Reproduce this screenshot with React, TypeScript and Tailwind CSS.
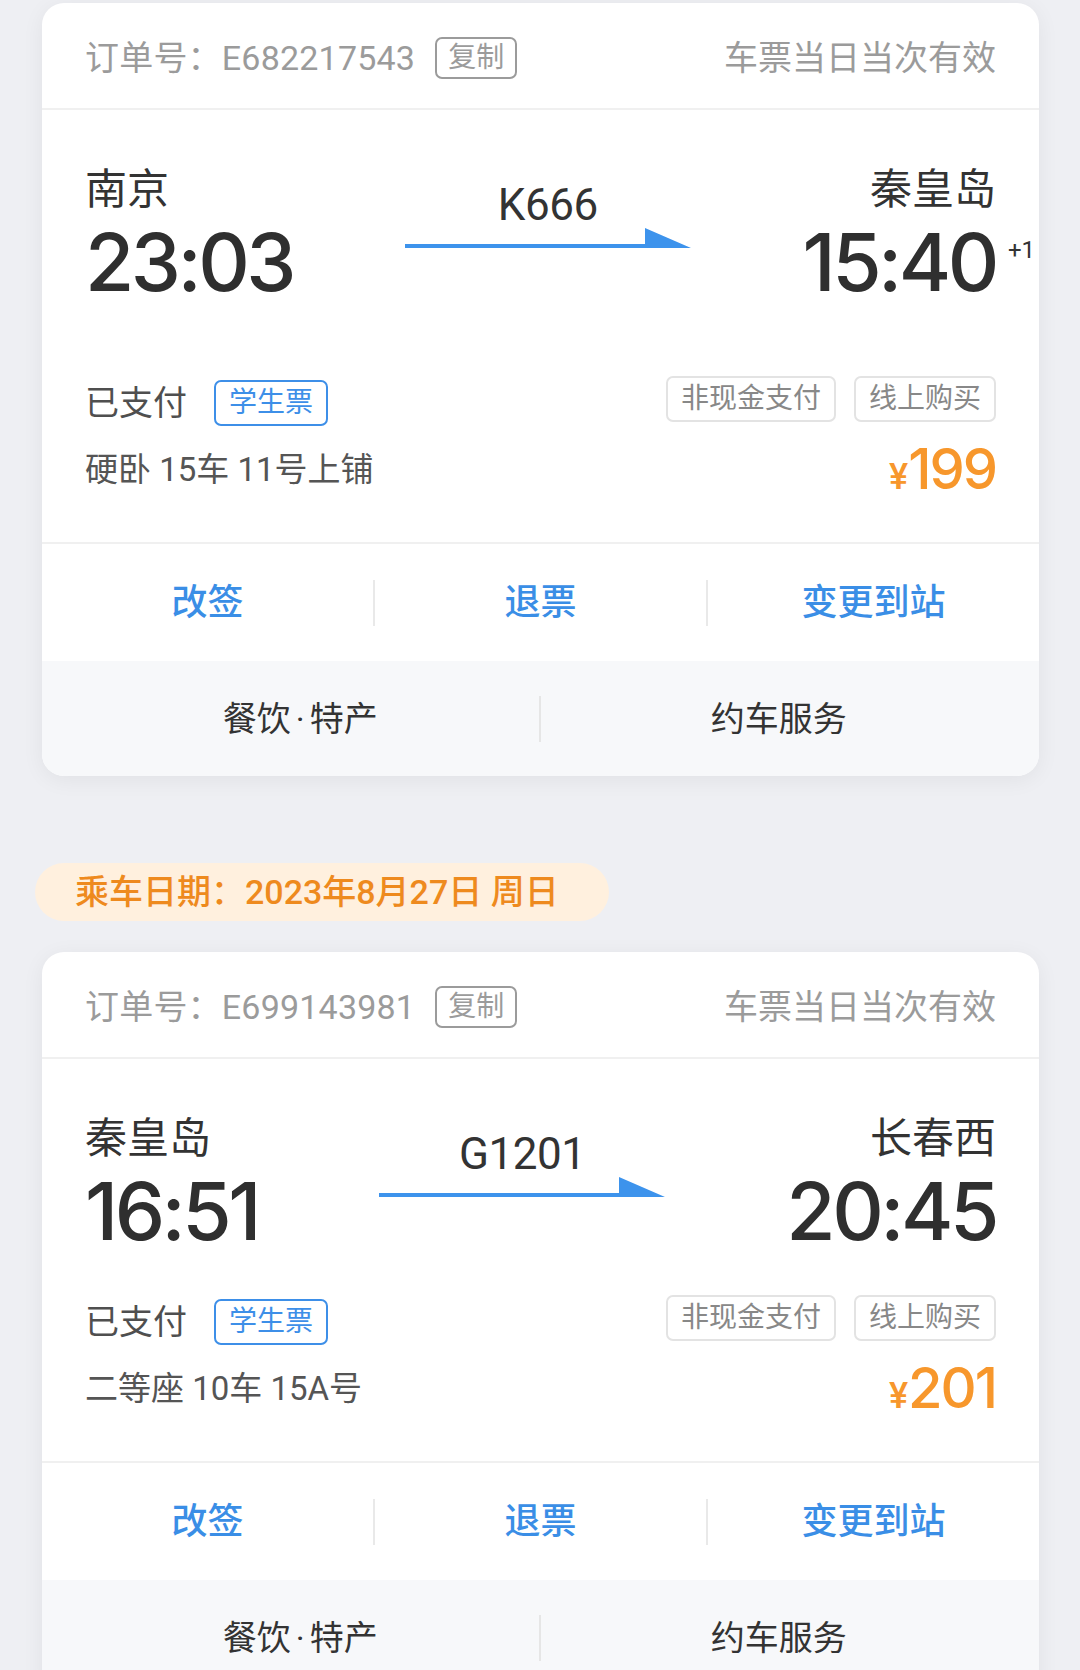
import React from "react";

type Ticket = {
  order: string;
  from: string;
  to: string;
  dep: string;
  arr: string;
  train: string;
  plusOne?: boolean;
  seat: string;
  price: string;
  gap: "wide" | "narrow";
};

const tickets: Ticket[] = [
  { order: "E682217543", from: "南京", to: "秦皇岛", dep: "23:03", arr: "15:40", train: "K666", plusOne: true, seat: "硬卧 15车 11号上铺", price: "199", gap: "wide" },
  { order: "E699143981", from: "秦皇岛", to: "长春西", dep: "16:51", arr: "20:45", train: "G1201", seat: "二等座 10车 15A号", price: "201", gap: "narrow" },
];

function Arrow() {
  return (
    <svg width="286" height="21" viewBox="0 0 286 21" className="-mt-px block">
      <polygon points="0,16 240,16 240,0 286,20 0,20" fill="#3d93ec" />
    </svg>
  );
}

function GrayTag({ children }: { children: React.ReactNode }) {
  return (
    <span className="flex h-[46px] items-center rounded-[7px] border-2 border-[#e3e3e3] px-[13px] text-[28px] leading-none text-[#888]">
      {children}
    </span>
  );
}

function TicketCard({ t }: { t: Ticket }) {
  return (
    <div className="ml-[42px] w-[997px] overflow-hidden rounded-[22px] bg-white shadow-[0_4px_22px_rgba(0,0,0,0.06)]">
      {/* order no. */}
      <div className="flex h-[107px] items-center justify-between border-b-2 border-[#f0f0f0] px-[43px] pt-[4px]">
        <div className="flex items-center text-[34px] leading-none text-[#9b9b9b]">
          <span className="tracking-[0.2px]">订单号：{t.order}</span>
          <span className="ml-[20px] flex h-[42px] items-center rounded-[7px] border-2 border-[#9b9b9b] px-[11px] text-[28px] leading-none">
            复制
          </span>
        </div>
        <span className="text-[34px] leading-none text-[#9b9b9b]">车票当日当次有效</span>
      </div>

      {/* route */}
      <div className="border-b-2 border-[#f0f0f0] px-[43px] pb-[45px] pt-[56px]">
        <div className="flex items-start">
          <div className="flex flex-col items-start">
            <span className="text-[42px] leading-[48px] text-[#333]">{t.from}</span>
            <span className="mt-[8px] font-['Inter',sans-serif] text-[80px] font-medium leading-none tracking-[-3.5px] text-[#2f2f2f]">
              {t.dep}
            </span>
          </div>
          <div className="flex flex-1 flex-col items-center pt-[15px]">
            <span className="text-[44px] leading-[48px] tracking-[-0.5px] text-[#333]">{t.train}</span>
            <Arrow />
          </div>
          <div className="flex flex-col items-end">
            <span className="text-[42px] leading-[48px] text-[#333]">{t.to}</span>
            <span className="relative mt-[8px] font-['Inter',sans-serif] text-[80px] font-medium leading-none tracking-[-3.5px] text-[#2f2f2f]">
              {t.arr}
              {t.plusOne && (
                <span className="absolute left-full top-[16px] ml-[12px] font-['Roboto',sans-serif] text-[24px] font-normal leading-none tracking-normal text-[#333]">
                  +1
                </span>
              )}
            </span>
          </div>
        </div>

        <div className={t.gap === "wide" ? "mt-[77px]" : "mt-[47px]"}>
          <div className="flex h-[48px] items-center justify-between">
            <div className="flex items-center">
              <span className="text-[34px] leading-none text-[#4f4f4f]">已支付</span>
              <span className="ml-[27px] flex h-[46px] items-center rounded-[7px] border-2 border-[#3d8fe8] px-[13px] text-[28px] leading-none text-[#3d8fe8]">
                学生票
              </span>
            </div>
            <div className="mb-[8px] flex items-center gap-[18px]">
              <GrayTag>非现金支付</GrayTag>
              <GrayTag>线上购买</GrayTag>
            </div>
          </div>
          <div className="mt-[14px] flex h-[56px] items-center justify-between">
            <span className="text-[33px] leading-none text-[#555]">{t.seat}</span>
            <span className="font-medium leading-none text-[#f7972c]">
              <span className="text-[36px]">¥</span>
              <span className="font-['Inter',sans-serif] text-[56px] tracking-[-2px]">{t.price}</span>
            </span>
          </div>
        </div>
      </div>

      {/* actions */}
      <div className="flex h-[117px] items-center">
        <span className="flex-1 text-center text-[36px] font-medium leading-none text-[#3a8ee6]">改签</span>
        <span className="h-[46px] w-[2px] bg-[#e9e9e9]" />
        <span className="flex-1 text-center text-[36px] font-medium leading-none text-[#3a8ee6]">退票</span>
        <span className="h-[46px] w-[2px] bg-[#e9e9e9]" />
        <span className="flex-1 text-center text-[36px] font-medium leading-none text-[#3a8ee6]">变更到站</span>
      </div>

      {/* extra services */}
      <div className="flex h-[115px] items-center bg-[#f7f8fa]">
        <span className="flex-1 pl-[20px] text-center text-[34px] leading-none text-[#333]">
          餐饮<span className="mx-[5px]">·</span>特产
        </span>
        <span className="h-[46px] w-[2px] bg-[#e6e6e6]" />
        <span className="flex-1 pr-[22px] text-center text-[34px] leading-none text-[#333]">约车服务</span>
      </div>
    </div>
  );
}

export default function App() {
  return (
    <div className="min-h-screen bg-[#eeeff3] pt-[3px] font-['Roboto','Noto_Sans_CJK_SC',sans-serif]">
      <TicketCard t={tickets[0]} />

      <div className="ml-[35px] mt-[87px] flex h-[58px] w-[574px] items-center rounded-full bg-[#fff0de] pl-[40px] text-[34px] font-medium leading-none text-[#ee8a1e]">
        乘车日期：2023年8月27日 周日
      </div>

      <div className="mt-[31px] pb-[40px]">
        <TicketCard t={tickets[1]} />
      </div>
    </div>
  );
}
